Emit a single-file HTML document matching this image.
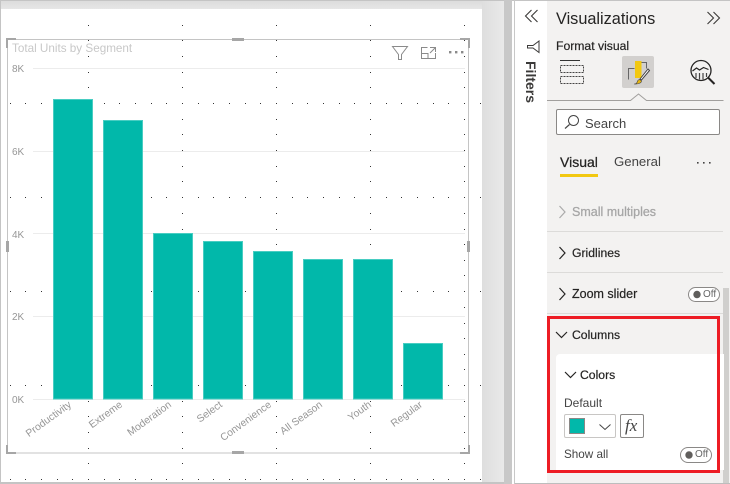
<!DOCTYPE html>
<html><head><meta charset="utf-8">
<style>
html,body{margin:0;padding:0;background:#fff}
#r{position:relative;width:730px;height:484px;overflow:hidden;background:#fff;font-family:"Liberation Sans",sans-serif}
#r div{position:absolute}
.t{white-space:nowrap;color:#252423;line-height:16px}
</style></head><body>
<div id="r">
<div style="left:0;top:0;width:504px;height:484px;background:#e9e9e9"></div>
<div style="left:0;top:0;width:730px;height:1px;background:#c4c4c4"></div>
<div style="left:1px;top:1px;width:503px;height:8px;background:linear-gradient(#dcdcdc,#e6e6e6)"></div>
<div style="left:0;top:0;width:1px;height:484px;background:#c4c4c4"></div>
<div style="left:482px;top:1px;width:22px;height:483px;background:linear-gradient(90deg,#dedede,#e9e9e9)"></div>
<div style="left:1px;top:9px;width:481px;height:473px;background:#fff"></div>
<div style="left:0;top:482px;width:504px;height:2px;background:#c4c4c4"></div>
<div style="left:504px;top:0;width:8px;height:484px;background:#c8c8c8"></div>
<div style="left:512px;top:1px;width:2px;height:483px;background:#fff"></div>
<div style="left:514px;top:0;width:1px;height:484px;background:#c8c8c8"></div>
<div style="left:547px;top:1px;width:183px;height:483px;background:#f3f2f1"></div>

<svg style="position:absolute;left:0;top:0" width="482" height="484">
<g fill="#333">
<path id="col" d="M88 25h1v1h-1zM88 40h1v1h-1zM88 56h1v1h-1zM88 72h1v1h-1zM88 87h1v1h-1zM88 119h1v1h-1zM88 134h1v1h-1zM88 150h1v1h-1zM88 166h1v1h-1zM88 181h1v1h-1zM88 213h1v1h-1zM88 229h1v1h-1zM88 244h1v1h-1zM88 260h1v1h-1zM88 275h1v1h-1zM88 307h1v1h-1zM88 323h1v1h-1zM88 338h1v1h-1zM88 354h1v1h-1zM88 369h1v1h-1zM88 401h1v1h-1zM88 416h1v1h-1zM88 432h1v1h-1zM88 448h1v1h-1zM88 463h1v1h-1z"/>
<use href="#col" x="94"/><use href="#col" x="188"/><use href="#col" x="282"/><use href="#col" x="376"/>
<path id="row" d="M10 103h1v1h-1zM25 103h1v1h-1zM41 103h1v1h-1zM57 103h1v1h-1zM72 103h1v1h-1zM88 103h1v1h-1zM104 103h1v1h-1zM119 103h1v1h-1zM135 103h1v1h-1zM151 103h1v1h-1zM166 103h1v1h-1zM182 103h1v1h-1zM198 103h1v1h-1zM213 103h1v1h-1zM229 103h1v1h-1zM245 103h1v1h-1zM260 103h1v1h-1zM276 103h1v1h-1zM292 103h1v1h-1zM307 103h1v1h-1zM323 103h1v1h-1zM339 103h1v1h-1zM354 103h1v1h-1zM370 103h1v1h-1zM386 103h1v1h-1zM401 103h1v1h-1zM417 103h1v1h-1zM433 103h1v1h-1zM448 103h1v1h-1zM464 103h1v1h-1zM480 103h1v1h-1z"/>
<use href="#row" y="94"/><use href="#row" y="188"/><use href="#row" y="282"/><use href="#row" y="376"/>
</g>
<rect x="7.500" y="39.500" width="461" height="413.500" fill="none" stroke="#c4c4c4"/>
<g fill="#a6a6a6">
<path d="M6 38h10v2h-8v8h-2z"/>
<path d="M232 38h12v3h-12zM232 451h12v3h-12zM6 241h3v11h-3zM467 241h3v11h-3z"/>
<path d="M460 38h10v10h-2v-8h-8z"/>
<path d="M6 445h2v7h8v2h-10z"/>
<path d="M460 452h8v-7h2v9h-10z"/>
</g>
<g fill="#ececec">
<rect x="33" y="68" width="432" height="1"/>
<rect x="33" y="151" width="432" height="1"/>
<rect x="33" y="233" width="432" height="1"/>
<rect x="33" y="316" width="432" height="1"/>
<rect x="33" y="399" width="432" height="1"/>
</g>
<g fill="#01b8aa" stroke="#48cdc2" stroke-width="1">
<rect x="53.500" y="99.500" width="39" height="299.500"/>
<rect x="103.500" y="120.500" width="39" height="278.500"/>
<rect x="153.500" y="233.500" width="39" height="165.500"/>
<rect x="203.500" y="241.500" width="39" height="157.500"/>
<rect x="253.500" y="251.500" width="39" height="147.500"/>
<rect x="303.500" y="259.500" width="39" height="139.500"/>
<rect x="353.500" y="259.500" width="39" height="139.500"/>
<rect x="403.500" y="343.500" width="39" height="55.500"/>
</g>
<g font-family="Liberation Sans, sans-serif" font-size="10" fill="#969696">
<text x="12" y="72">8K</text>
<text x="12" y="155">6K</text>
<text x="12" y="238">4K</text>
<text x="12" y="320">2K</text>
<text x="12" y="403">0K</text>
<g text-anchor="end" font-size="10.300">
<text transform="translate(72,406) rotate(-36)">Productivity</text>
<text transform="translate(123,406) rotate(-36)">Extreme</text>
<text transform="translate(172,406) rotate(-36)">Moderation</text>
<text transform="translate(223,406) rotate(-36)">Select</text>
<text transform="translate(272,406) rotate(-36)">Convenience</text>
<text transform="translate(323,406) rotate(-36)">All Season</text>
<text transform="translate(372,406) rotate(-36)">Youth</text>
<text transform="translate(423,406) rotate(-36)">Regular</text>
</g>
</g>
<text x="12" y="52" font-family="Liberation Sans, sans-serif" font-size="11.700" fill="#c8c8c8">Total Units by Segment</text>
<g fill="none" stroke="#8a8a8a" stroke-width="1">
<path d="M392.500 46.500h15l-6 8v5h-3v-5z"/>
<path d="M421.500 59V47.500h6M421.500 53.500h6.500v5.500M421 58.500h14.500V53M430 47.500h5.500V52M435 48l-5 5"/>
</g>
<g fill="#8a8a8a"><rect x="449" y="51" width="2.400" height="2.400"/><rect x="455" y="51" width="2.400" height="2.400"/><rect x="461" y="51" width="2.400" height="2.400"/></g>
</svg>

<svg style="position:absolute;left:515px;top:0" width="215" height="484" fill="none">
<path d="M16.500 10l-6 6 6 6M22.500 10l-6 6 6 6" stroke="#3b3a39" stroke-width="1.100"/>
<path d="M24 41v11.500l-6-4.500h-5.500v-2.500h5.500z" stroke="#3b3a39" stroke-width="1"/>
<path d="M192.500 12l6 6-6 6M198.500 12l6 6-6 6" stroke="#3b3a39" stroke-width="1.100"/>
<path d="M45 60.500h20" stroke="#333" stroke-width="1"/>
<rect x="45.500" y="65.500" width="23" height="7" stroke="#444" stroke-dasharray="2 1"/>
<rect x="45.500" y="76.500" width="23" height="7" stroke="#444" stroke-dasharray="2 1"/>
<rect x="107" y="56" width="32" height="32" rx="2" fill="#d2d0ce"/>
<path d="M113.500 79.500v-11h6M126.500 62.500h5v6" stroke="#666" stroke-width="1"/>
<rect x="120" y="61" width="6.500" height="17" fill="#f2c811"/>
<path d="M125 79l8-10 1.500 1.500-8 9.500z" fill="#fff" stroke="#444" stroke-width="1"/>
<path d="M119 84c2.500 0 3-1 3.500-3 1-2 3-1.500 4 0 .2 2-3.500 3.300-7.500 3z" fill="#e8b610" stroke="#444" stroke-width=".6"/>
<g transform="translate(0.500,0)">
<circle cx="185.500" cy="70.500" r="10" stroke="#252423" stroke-width="1.300"/>
<path d="M192.500 77.500l6.500 6.500" stroke="#252423" stroke-width="2"/>
<path d="M177 71l4-3 3 2 4-2.500 5 2" stroke="#252423" stroke-width="1.200"/>
<path d="M180.500 73v5M184 73v6.500M187.500 73v6.500M191 73v4" stroke="#444" stroke-width="1.200"/>
</g>
<path d="M32 100.500h83.500l8-6.500 8 6.500h77" stroke="#a19f9d" stroke-width="1"/>
<rect x="41.500" y="109.500" width="163" height="25" rx="1.500" fill="#fff" stroke="#8a8886"/>
<circle cx="58.500" cy="120.500" r="5" stroke="#444" stroke-width="1"/>
<path d="M54.500 124.500l-4.500 4" stroke="#444" stroke-width="1.200"/>
<rect x="45" y="174" width="38" height="3" fill="#f2c811"/>
<g fill="#444"><rect x="182" y="162" width="1.600" height="1.600"/><rect x="188" y="162" width="1.600" height="1.600"/><rect x="194" y="162" width="1.600" height="1.600"/></g>
<path d="M32 231.500h176M32 272.500h176M32 313.500h176" stroke="#dcdbd9"/>
<rect x="208" y="288" width="6" height="196" fill="#d0cfcd"/>
<path d="M44.500 206l5.500 6-5.500 6" stroke="#aaa" stroke-width="1.200"/>
<path d="M44.500 247l5.500 6-5.500 6" stroke="#252423" stroke-width="1.200"/>
<path d="M44.500 288l5.500 6-5.500 6" stroke="#252423" stroke-width="1.200"/>
<path d="M41 470v-112a4 4 0 0 1 4-4h164v116z" fill="#fff"/>
<path d="M41 332l5.500 5.500 5.500-5.500" stroke="#252423" stroke-width="1.200"/>
<path d="M50 372l5.500 5.500 5.500-5.500" stroke="#252423" stroke-width="1.200"/>
<rect x="49.500" y="414.500" width="51" height="23" rx="1.500" fill="#fff" stroke="#c8c6c4"/>
<rect x="54.500" y="418.500" width="15" height="15" fill="#01b8aa" stroke="#8a8886"/>
<path d="M84.500 424.500l5.500 5 5.500-5" stroke="#444" stroke-width="1"/>
<rect x="105.500" y="414.500" width="23" height="23" rx="1.500" fill="#fff" stroke="#8a8886"/>
<rect x="173.500" y="287.500" width="31" height="14" rx="7" fill="#fff" stroke="#8a8886"/>
<circle cx="182" cy="294.500" r="3.700" fill="#605e5c"/>
<rect x="165.500" y="447.500" width="31" height="15" rx="7.500" fill="#fff" stroke="#8a8886"/>
<circle cx="174" cy="455" r="3.700" fill="#605e5c"/>
<rect x="33.500" y="317.500" width="170" height="154" stroke="#ed1c24" stroke-width="3"/>
<path d="M0 483.500h215" stroke="#bdbdbd"/>
</svg>

<div class="t" style="left:556px;top:10px;font-size:16.300px;line-height:18px;">Visualizations</div>
<div class="t" style="left:556px;top:38px;font-size:12.200px;-webkit-text-stroke:.2px #252423">Format visual</div>
<div class="t" style="left:585px;top:116px;font-size:13px;color:#444">Search</div>
<div class="t" style="left:560px;top:154px;font-size:14px;-webkit-text-stroke:.25px #252423">Visual</div>
<div class="t" style="left:614px;top:154px;font-size:13.200px;color:#444">General</div>
<div class="t" style="left:572px;top:204px;font-size:12.500px;color:#a6a6a6;-webkit-text-stroke:.25px #a6a6a6">Small multiples</div>
<div class="t" style="left:572px;top:245px;font-size:12.200px;-webkit-text-stroke:.2px #252423">Gridlines</div>
<div class="t" style="left:572px;top:286px;font-size:12.500px;-webkit-text-stroke:.2px #252423">Zoom slider</div>
<div class="t" style="left:572px;top:327px;font-size:12.200px;-webkit-text-stroke:.2px #252423">Columns</div>
<div class="t" style="left:580px;top:367px;font-size:12.200px;-webkit-text-stroke:.2px #252423">Colors</div>
<div class="t" style="left:564px;top:395px;font-size:12px;color:#444">Default</div>
<div class="t" style="left:564px;top:447px;font-size:11.700px;color:#444">Show all</div>
<div class="t" style="left:703px;top:287px;font-size:10px;color:#666">Off</div>
<div class="t" style="left:695px;top:447px;font-size:10px;color:#666">Off</div>
<div class="t" style="left:625px;top:417px;font-size:17px;line-height:18px;font-family:'Liberation Serif',serif;font-style:italic;color:#444">fx</div>
<div class="t" style="left:539px;top:61px;font-size:14px;font-weight:700;color:#3b3a39;transform-origin:0 0;transform:rotate(90deg);">Filters</div>
</div>
</body></html>
